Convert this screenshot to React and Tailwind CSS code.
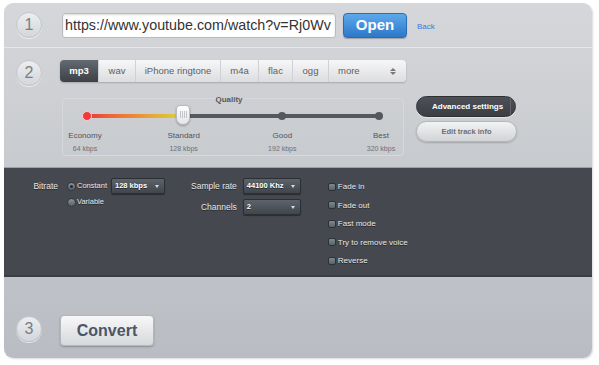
import { useState } from "react";

const formats = [
  { name: "mp3", w: "w-[39px]" },
  { name: "wav", w: "w-[37px]" },
  { name: "iPhone ringtone", w: "w-[85px]" },
  { name: "m4a", w: "w-[38px]" },
  { name: "flac", w: "w-[34px]" },
  { name: "ogg", w: "w-[36px]" },
];

const levels = [
  { name: "Economy", rate: "64 kbps" },
  { name: "Standard", rate: "128 kbps" },
  { name: "Good", rate: "192 kbps" },
  { name: "Best", rate: "320 kbps" },
];

const options = ["Fade in", "Fade out", "Fast mode", "Try to remove voice", "Reverse"];

function StepNumber({ n }) {
  return (
    <div className="w-[26px] h-[26px] shrink-0 rounded-full border border-[#c3c6ca] bg-gradient-to-b from-[#eceef0] to-[#d3d6da] shadow-[0_1px_0_rgba(255,255,255,0.6)] flex items-center justify-center text-[16px] leading-none text-[#7a7e84]">
      {n}
    </div>
  );
}

function DarkSelect({ value, w }) {
  return (
    <div className={`${w} h-[16px] shrink-0 rounded-[2px] border border-[#2c2f33] bg-gradient-to-b from-[#5d636b] to-[#41464d] shadow-[0_1px_1px_rgba(0,0,0,0.4)] flex items-center justify-between pl-[3px] pr-[5px] text-[7.5px] font-bold text-white whitespace-nowrap`}>
      <span>{value}</span>
      <span className="w-0 h-0 border-l-[2px] border-r-[2px] border-t-[3px] border-l-transparent border-r-transparent border-t-[#d8dbe0]" />
    </div>
  );
}

function Radio({ checked }) {
  return (
    <span className="w-[9px] h-[9px] shrink-0 rounded-full border border-[#33373c] bg-gradient-to-b from-[#8d939b] to-[#5b6068] flex items-center justify-center">
      {checked && <span className="w-[3px] h-[3px] rounded-full bg-[#1d2a3a]" />}
    </span>
  );
}

export default function App() {
  const [format, setFormat] = useState("mp3");
  const [url, setUrl] = useState("https://www.youtube.com/watch?v=Rj0Wv");

  return (
    <div className="w-[599px] h-[365px] bg-white pt-[3px] pl-[4px] font-['Liberation_Sans',Arial,sans-serif]">
      <div className="w-[588px] h-[355px] rounded-[9px] overflow-hidden bg-gradient-to-b from-[#d6d7da] via-[#c6c9cd] to-[#b9bdc3] flex flex-col shadow-[1px_1px_2px_rgba(0,0,0,0.15)]">
        {/* step 1 */}
        <div className="h-[44px] shrink-0 flex items-center pl-[12px]">
          <StepNumber n="1" />
          <input
            value={url}
            onChange={(e) => setUrl(e.target.value)}
            className="ml-[20px] w-[274px] h-[25px] rounded-[3px] bg-white border border-[#b8bbbf] shadow-[inset_0_1px_2px_rgba(0,0,0,0.15)] pl-[2px] pr-0 text-[14.3px] text-[#333] outline-none"
          />
          <button className="ml-[7px] w-[64px] h-[25px] rounded-[4px] bg-gradient-to-b from-[#5ea9ec] to-[#2c78c8] border border-[#2a6db5] shadow-[0_1px_1px_rgba(0,0,0,0.25)] text-white text-[15px] font-bold">
            Open
          </button>
          <a className="ml-[10px] mt-[4px] text-[8px] text-[#3d78d8]">Back</a>
        </div>

        {/* step 2 */}
        <div className="h-[120px] shrink-0 border-t border-[#e6e7e9] flex pl-[12px] pt-[12px]">
          <StepNumber n="2" />
          <div className="ml-[18px] flex flex-col">
            <div className="flex h-[22px] w-[346px] rounded-[4px] bg-gradient-to-b from-[#f7f7f8] to-[#dcdde0] shadow-[0_1px_2px_rgba(0,0,0,0.2)] text-[9.5px] text-[#5b5f65]">
              {formats.map((f) => (
                <button
                  key={f.name}
                  onClick={() => setFormat(f.name)}
                  className={`${f.w} h-full border-r border-[#cfd1d4] whitespace-nowrap ${
                    format === f.name
                      ? "bg-gradient-to-b from-[#646a72] to-[#3d4147] text-white font-bold rounded-l-[4px]"
                      : ""
                  }`}
                >
                  {f.name}
                </button>
              ))}
              <div className="flex-1 flex items-center justify-between pl-[9px] pr-[10px]">
                <span>more</span>
                <span className="flex flex-col gap-[1px]">
                  <span className="w-0 h-0 border-l-[3px] border-r-[3px] border-b-[3px] border-l-transparent border-r-transparent border-b-[#777]" />
                  <span className="w-0 h-0 border-l-[3px] border-r-[3px] border-t-[3px] border-l-transparent border-r-transparent border-t-[#777]" />
                </span>
              </div>
            </div>

            <div className="flex mt-[16px]">
              <div className="ml-[2px] w-[342px] h-[58px] rounded-[4px] border border-[#d6d8db] flex flex-col">
                <div className="text-center text-[8px] font-bold text-[#555a60] leading-none mt-[-3px] ml-[-8px]">Quality</div>
                <div className="relative mx-[24px] mt-[10px] h-[4px] rounded-full bg-[#56595d]">
                  <div className="absolute left-0 top-0 h-full w-[33%] rounded-full bg-gradient-to-r from-[#ec3438] via-[#ec8a36] to-[#d6d636]" />
                  <span className="absolute left-[-5px] top-[-3px] w-[10px] h-[10px] rounded-full bg-[#ee3b3b] border border-[#f7d0d0]" />
                  <span className="absolute left-[66.7%] ml-[-4px] top-[-2px] w-[8px] h-[8px] rounded-full bg-[#55585c]" />
                  <span className="absolute right-[-4px] top-[-2px] w-[8px] h-[8px] rounded-full bg-[#55585c]" />
                  <span className="absolute left-[33%] ml-[-7px] top-[-9px] w-[14px] h-[20px] rounded-t-[4px] rounded-b-[7px] bg-gradient-to-b from-white to-[#e4e5e7] border border-[#b9bbbf] shadow-[0_1px_2px_rgba(0,0,0,0.3)] flex justify-center gap-[1px] pt-[5px]">
                    <span className="w-px h-[7px] bg-[#c2c4c8]" />
                    <span className="w-px h-[7px] bg-[#c2c4c8]" />
                    <span className="w-px h-[7px] bg-[#c2c4c8]" />
                    <span className="w-px h-[7px] bg-[#c2c4c8]" />
                  </span>
                </div>
                <div className="flex justify-between mt-[13px]">
                  {levels.map((l) => (
                    <div key={l.name} className="w-[44px] flex flex-col items-center">
                      <span className="text-[8px] leading-[10px] text-[#50555b] whitespace-nowrap">{l.name}</span>
                      <span className="text-[7px] leading-[10px] mt-[3px] text-[#6c7177] whitespace-nowrap">{l.rate}</span>
                    </div>
                  ))}
                </div>
              </div>

              <div className="ml-[12px] mt-[-2px] flex flex-col gap-[4px]">
                <button className="w-[100px] h-[21px] rounded-full bg-gradient-to-b from-[#4d5157] to-[#3b3e43] border border-[#2e3034] text-white text-[8px] font-bold shadow-[0_1px_1px_rgba(255,255,255,0.5)] flex items-center pl-[15px] whitespace-nowrap">
                  Advanced settings
                  <span className="ml-[7px] w-px h-[19px] bg-[#62666c]" />
                </button>
                <button className="w-[101px] h-[21px] rounded-full bg-gradient-to-b from-[#f2f3f4] to-[#d1d3d6] border border-[#b4b7bb] text-[#6a6e74] text-[7.5px] font-bold shadow-[0_1px_2px_rgba(0,0,0,0.2)] whitespace-nowrap">
                  Edit track info
                </button>
              </div>
            </div>
          </div>
        </div>

        {/* advanced settings */}
        <div className="h-[110px] shrink-0 bg-[#45484e] border-t border-[#9da1a7] border-b-[2px] border-b-[#3a3d42] flex text-[8.5px] text-[#e6e8eb] [text-shadow:0_1px_0_rgba(0,0,0,0.5)] pt-[10px] whitespace-nowrap">
          <div className="w-[54px] text-right leading-[16px]">Bitrate</div>
          <div className="ml-[9px] w-[44px] shrink-0 flex flex-col gap-[6px] mt-[3px] text-[7.5px]">
            <label className="flex items-center gap-[1px] leading-[10px]">
              <Radio checked /> Constant
            </label>
            <label className="flex items-center gap-[1px] leading-[10px]">
              <Radio /> Variable
            </label>
          </div>
          <DarkSelect value="128 kbps" w="w-[54px]" />
          <div className="ml-[26px] grid grid-cols-[auto_58px] gap-x-[6px] gap-y-[5px] items-center self-start">
            <span className="justify-self-end">Sample rate</span>
            <DarkSelect value="44100 Khz" w="w-[58px]" />
            <span className="justify-self-end">Channels</span>
            <DarkSelect value="2" w="w-[58px]" />
          </div>
          <div className="ml-[27px] flex flex-col gap-[7.5px] mt-[3px] text-[8px]">
            {options.map((o) => (
              <label key={o} className="flex items-center gap-[2px] leading-[11px]">
                <span className="w-[8px] h-[8px] shrink-0 rounded-[2px] border border-[#2e3237] bg-gradient-to-b from-[#7f8790] to-[#59616b]" />
                {o}
              </label>
            ))}
          </div>
        </div>

        {/* step 3 */}
        <div className="flex-1 flex items-start pl-[12px] pt-[38px]">
          <div className="mt-[1px]">
            <StepNumber n="3" />
          </div>
          <button className="ml-[18px] w-[94px] h-[31px] rounded-[4px] bg-gradient-to-b from-[#f8f8f9] to-[#d6d8db] border border-[#b3b6ba] shadow-[0_1px_2px_rgba(0,0,0,0.25)] text-[16px] font-bold text-[#4b5566]">
            Convert
          </button>
        </div>
      </div>
    </div>
  );
}
